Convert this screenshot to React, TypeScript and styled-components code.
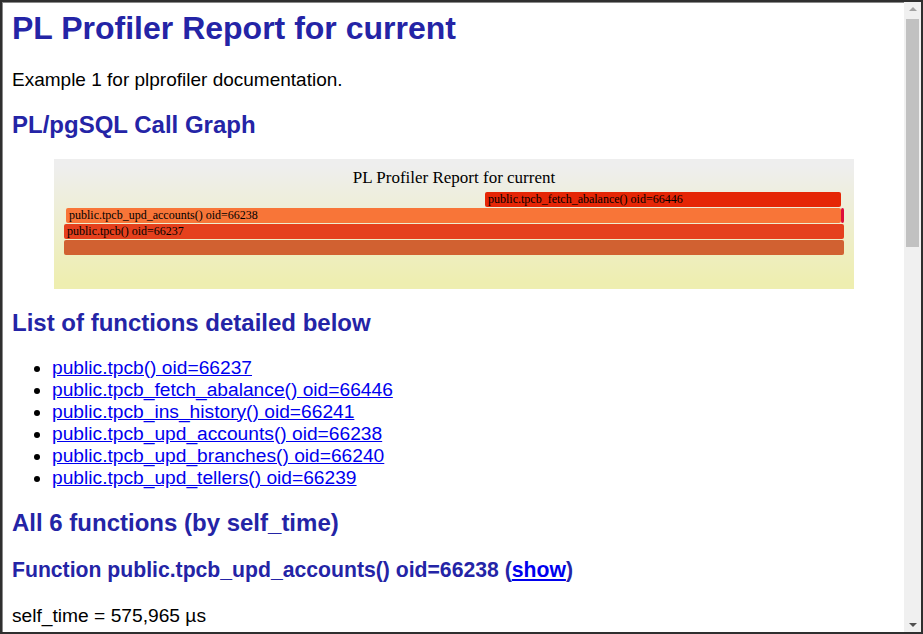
import styled, { createGlobalStyle } from "styled-components";

interface Bar {
  x: number;
  y: number;
  w: number;
  fill: string;
  label?: string;
}

const bars: Bar[] = [
  { x: 10, y: 81, w: 780, fill: "rgb(209,97,49)" },
  { x: 10, y: 65, w: 780, fill: "rgb(229,64,29)", label: "public.tpcb() oid=66237" },
  { x: 12, y: 49, w: 775, fill: "rgb(248,117,56)", label: "public.tpcb_upd_accounts() oid=66238" },
  { x: 787, y: 49, w: 3, fill: "rgb(222,14,58)" },
  { x: 431, y: 33, w: 356, fill: "rgb(229,38,6)", label: "public.tpcb_fetch_abalance() oid=66446" },
];

const functions = [
  "public.tpcb() oid=66237",
  "public.tpcb_fetch_abalance() oid=66446",
  "public.tpcb_ins_history() oid=66241",
  "public.tpcb_upd_accounts() oid=66238",
  "public.tpcb_upd_branches() oid=66240",
  "public.tpcb_upd_tellers() oid=66239",
];

const GlobalStyle = createGlobalStyle`
  html, body {
    margin: 0;
    padding: 0;
    overflow: hidden;
    background: #2f2f2f;
  }
`;

const FlameGraph = () => (
  <svg width={800} height={130} viewBox="0 0 800 130">
    <defs>
      <linearGradient id="background" x1="0" y1="0" x2="0" y2="1">
        <stop offset="5%" stopColor="#eeeeee" />
        <stop offset="95%" stopColor="#eeeeb0" />
      </linearGradient>
    </defs>
    <rect x={0} y={0} width={800} height={130} fill="url(#background)" />
    <text
      x={400}
      y={24}
      textAnchor="middle"
      fontSize={17}
      fontFamily="'Liberation Serif', serif"
      fill="#000"
    >
      PL Profiler Report for current
    </text>
    {bars.map((b, i) => (
      <g key={i}>
        <rect x={b.x} y={b.y} width={b.w} height={15} rx={2} ry={2} fill={b.fill} />
        {b.label && (
          <text
            x={b.x + 3}
            y={b.y + 10.5}
            fontSize={12}
            fontFamily="'Liberation Serif', serif"
            fill="#000"
          >
            {b.label}
          </text>
        )}
      </g>
    ))}
  </svg>
);

const App = () => {
  return (
    <>
      <GlobalStyle />
      <Frame>
        <Page>
          <Title>PL Profiler Report for current</Title>
          <Lead>Example 1 for plprofiler documentation.</Lead>
          <SectionTitle>PL/pgSQL Call Graph</SectionTitle>
          <Graph>
            <FlameGraph />
          </Graph>
          <SectionTitle>List of functions detailed below</SectionTitle>
          <FunctionList>
            {functions.map((f) => (
              <li key={f}>
                <a href="#">{f}</a>
              </li>
            ))}
          </FunctionList>
          <SectionTitle>All 6 functions (by self_time)</SectionTitle>
          <FunctionTitle>
            Function public.tpcb_upd_accounts() oid=66238 (<a href="#">show</a>)
          </FunctionTitle>
          <Stat>self_time = 575,965 µs</Stat>
        </Page>
        <Scrollbar>
          <ArrowBox>
            <Arrow $dir="up" />
          </ArrowBox>
          <Thumb />
          <Track />
          <ArrowBox>
            <Arrow $dir="down" />
          </ArrowBox>
        </Scrollbar>
      </Frame>
    </>
  );
};

const Frame = styled.div`
  box-sizing: border-box;
  width: 923px;
  height: 634px;
  border: 2px solid #2f2f2f;
  display: flex;
  background: #fff;
`;

const Page = styled.div`
  flex: 1;
  overflow: hidden;
  padding: 8px 8px 0 10px;
  box-shadow: inset 1px 1px 0 #8a8a8a;
  font-family: "Liberation Sans", Arial, sans-serif;
  color: #000;

  & a {
    color: #0000ee;
    text-decoration: underline;
  }
`;

const Title = styled.h1`
  margin: 0 0 21.5px;
  font-size: 32px;
  font-weight: bold;
  color: #2424a6;
`;

const Lead = styled.p`
  margin: 0;
  font-size: 19px;
`;

const SectionTitle = styled.h2`
  margin: 20px 0;
  font-size: 24px;
  font-weight: bold;
  color: #2424a6;
`;

const Graph = styled.div`
  margin: 19px 0 0;
  text-align: center;
  line-height: 0;
`;

const FunctionList = styled.ul`
  margin: 20px 0 20px;
  padding-left: 40px;
  font-size: 19.2px;
`;

const FunctionTitle = styled.h3`
  margin: 21px 0 23px;
  font-size: 21.2px;
  font-weight: bold;
  color: #2424a6;
`;

const Stat = styled.p`
  margin: 0;
  font-size: 19.2px;
`;

const Scrollbar = styled.div`
  width: 17px;
  background: #f0f0f0;
  display: flex;
  flex-direction: column;
`;

const ArrowBox = styled.div`
  height: 17px;
  display: flex;
  align-items: center;
  justify-content: center;
`;

const Arrow = styled.div<{ $dir: "up" | "down" }>`
  width: 0;
  height: 0;
  border-left: 4px solid transparent;
  border-right: 4px solid transparent;
  ${(p) =>
    p.$dir === "up"
      ? "border-bottom: 4px solid #a3a3a3; margin-top: -4px;"
      : "border-top: 4px solid #505050; margin-top: 2px;"}
`;

const Thumb = styled.div`
  height: 228px;
  margin: 0 2px;
  background: #c1c1c1;
`;

const Track = styled.div`
  flex: 1;
`;

export default App;
